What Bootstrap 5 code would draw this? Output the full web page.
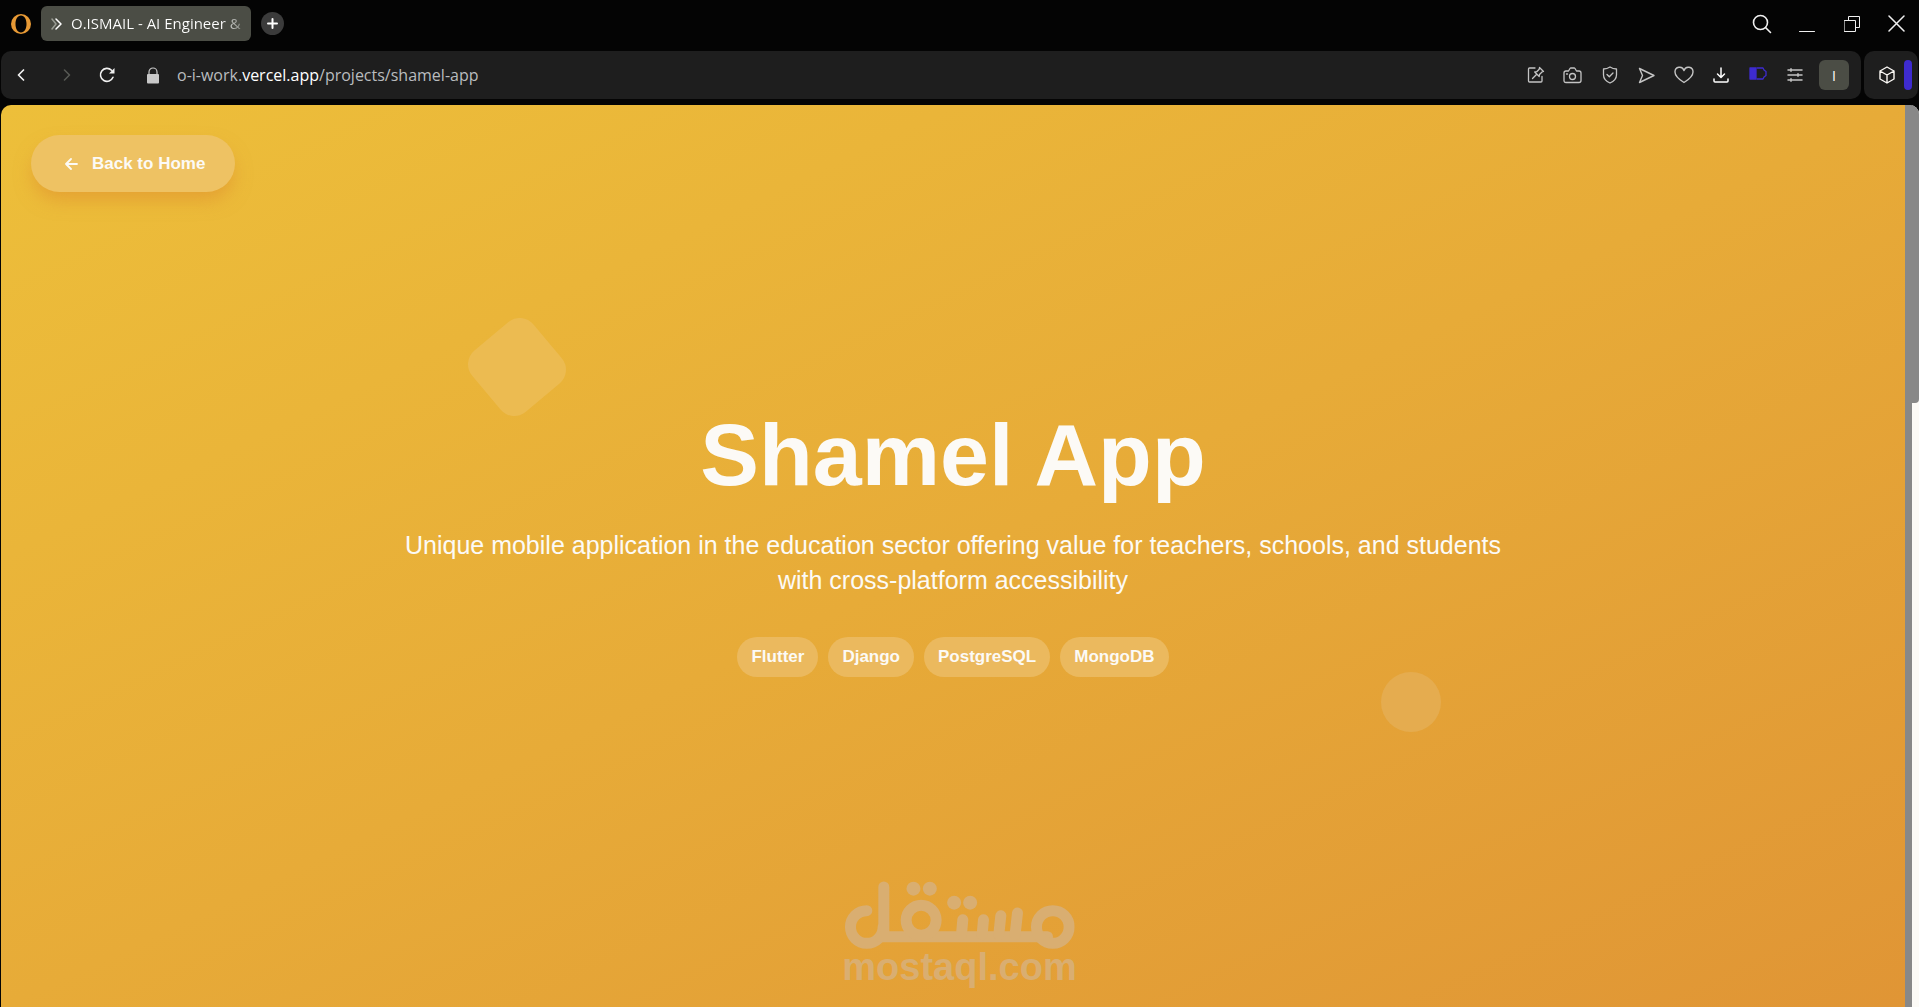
<!DOCTYPE html>
<html lang="en">
<head>
<meta charset="utf-8">
<meta name="viewport" content="width=device-width, initial-scale=1">
<title>O.ISMAIL - AI Engineer</title>
<link href="https://cdn.jsdelivr.net/npm/bootstrap@5.3.0/dist/css/bootstrap.min.css" rel="stylesheet">
<style>
  body { background: #040404; font-family: "Liberation Sans", Arial, sans-serif; color: #fcfaf6; }
  svg { display: block; fill: none; stroke: currentColor; stroke-linecap: round; stroke-linejoin: round; }
  button { color: inherit; }
  .chrome-text { font-family: "Open Sans", "Noto Sans", sans-serif; }

  .tab-strip { height: 51px; padding: 0 0 4px 11px; gap: 10px; }
  .tab-item { height: 35px; width: 210px; background: #4b4d45; border-radius: 6px; padding: 0 12px 0 10px; font-size: 15px; gap: 8px; color: #fff; }
  .tab-title { white-space: nowrap; background: linear-gradient(90deg, #fff 88%, #888a83); -webkit-background-clip: text; background-clip: text; color: transparent; }
  .tab-add { width: 23px; height: 23px; background: #3b3b3b; }
  .win-btn { width: 45px; height: 36px; color: #f0f0f0; }

  .bar-row { gap: 3px; padding: 0 1px; }
  .bar-panel { height: 48px; background: #1e1e1e; border-radius: 10px; }
  .bar-btn { width: 37px; height: 36px; color: #c4c4c4; }
  .nav-btn { width: 40px; height: 36px; color: #f0f0f0; }
  .nav-set { margin-right: 20px; }
  .nav-off { color: #585a55; margin-left: 6px; }
  .address-set { gap: 18px; color: #c8c8c8; }
  .address { font-size: 16px; color: #b9bcbe; white-space: nowrap; }
  .address strong { color: #fff; font-weight: 400; }
  .battery { color: #3e2bd0; }
  .avatar { width: 30px; height: 30px; background: #4b4d45; border-radius: 6px; font-size: 14px; color: #fff; margin: 0 12px 0 6px; }
  .side-panel { width: 54px; padding: 0 6px 0 14px; }
  .side-mark { width: 8px; height: 30px; background: #3e2bd0; border-radius: 4px; }

  .page-view { margin: 6px 0 0 1px; }
  .hero { background: linear-gradient(to bottom right, #edbf3a, #e7ab38 50%, #e09535); border-top-left-radius: 10px; padding-bottom: 29px; }
  .back-link { top: 30px; left: 30px; height: 57px; padding: 0 30px 0 34px; gap: 14px; border-radius: 29px; background: #eec263; color: #fcfaf6; font-size: 17px; font-weight: 700; box-shadow: 0 10px 18px -2px rgba(222, 140, 46, .55); }
  .hero-title { font-size: 88px; line-height: 96px; font-weight: 700; margin-bottom: 25px; }
  .hero-lead { font-size: 25px; line-height: 35px; max-width: 1120px; margin-bottom: 39px; }
  .tag-row { gap: 10px; }
  .tag-pill { height: 40px; padding: 0 14px; border-radius: 20px; background: #ebb95e; font-size: 17px; font-weight: 700; }
  .shape-square { width: 80px; height: 80px; left: 25%; top: 222px; border-radius: 18px; background: #ecbb51; transform: rotate(50deg); }
  .shape-round { width: 60px; height: 60px; right: 464px; bottom: 275px; border-radius: 50%; background: #e5ac4f; }

  .scroll-track { width: 14px; background: linear-gradient(90deg, #888 50%, #fcfaf6 50%); border-top-right-radius: 9px; }
  .scroll-thumb { height: 33%; background: #888; border-radius: 0 9px 4px 0; }

  .watermark { bottom: 22px; color: #d9ae71; font-size: 38px; line-height: 36px; font-weight: 700; pointer-events: none; }
</style>
</head>
<body>
<div class="d-flex flex-column vh-100 overflow-hidden position-relative">
  <header class="chrome-text">
    <div class="tab-strip d-flex align-items-center">
      <svg width="20" height="20" viewBox="0 0 20 20" class="flex-shrink-0" aria-label="Browser menu"><path fill="#e89a35" stroke="none" fill-rule="evenodd" d="M10 0a10 10 0 1 0 0 20a10 10 0 1 0 0-20zM10 1.500c3.500 0 5.500 4 5.500 8.500s-2 8.500-5.500 8.500s-5.500-4-5.500-8.500s2-8.500 5.500-8.500z"/></svg>
      <div class="tab-item d-flex align-items-center">
        <svg width="12" height="12" viewBox="0 0 12 12" class="flex-shrink-0" stroke-width="1.500"><path stroke="#9a9c94" d="M1 1l4 5l-4 5"/><path d="M5 1l5 5l-5 5"/></svg>
        <span class="tab-title">O.ISMAIL - AI Engineer &amp;</span>
      </div>
      <button class="tab-add btn p-0 border-0 rounded-circle d-flex align-items-center justify-content-center text-white" aria-label="New tab"><svg width="11" height="11" viewBox="0 0 11 11" stroke-width="2"><path d="M5.500 1v9M1 5.500h9"/></svg></button>
      <div class="d-flex ms-auto">
        <button class="win-btn btn p-0 border-0 d-flex align-items-center justify-content-center" aria-label="Search tabs"><svg width="20" height="20" viewBox="0 0 20 20" stroke-width="1.600"><circle cx="8.500" cy="8.500" r="7"/><path d="M13.500 13.500l5 5"/></svg></button>
        <button class="win-btn btn p-0 border-0 d-flex align-items-center justify-content-center" aria-label="Minimize"><svg width="16" height="16" viewBox="0 0 16 16"><path d="M.5 15.500h15"/></svg></button>
        <button class="win-btn btn p-0 border-0 d-flex align-items-center justify-content-center" aria-label="Restore"><svg width="16" height="16" viewBox="0 0 16 16"><path d="M.5 4.500h11v11h-11zM4.500 4.500v-4h11v11h-4"/></svg></button>
        <button class="win-btn btn p-0 border-0 d-flex align-items-center justify-content-center" aria-label="Close"><svg width="17" height="17" viewBox="0 0 17 17" stroke-width="1.500"><path d="M1 1l15 15M16 1l-15 15"/></svg></button>
      </div>
    </div>

    <div class="bar-row d-flex">
      <nav class="bar-panel d-flex align-items-center flex-grow-1">
        <div class="nav-set d-flex">
          <button class="nav-btn btn p-0 border-0 d-flex align-items-center justify-content-center" aria-label="Back"><svg width="8" height="12" viewBox="0 0 8 12" stroke-width="1.700"><path d="M6.500 1l-5 5l5 5"/></svg></button>
          <button class="nav-btn nav-off btn p-0 border-0 d-flex align-items-center justify-content-center" aria-label="Forward"><svg width="8" height="12" viewBox="0 0 8 12" stroke-width="1.500"><path d="M1.500 1l5 5l-5 5"/></svg></button>
          <button class="nav-btn btn p-0 border-0 d-flex align-items-center justify-content-center" aria-label="Reload"><svg width="16" height="16" viewBox="0 0 16 16" stroke-width="1.600"><path d="M12.500 3.200A6.500 6.500 0 1 0 14 10.300"/><path fill="currentColor" stroke="none" d="M15.500 1v5.500H10z"/></svg></button>
        </div>
        <div class="address-set d-flex align-items-center">
          <svg width="12" height="17" viewBox="0 0 12 17" class="flex-shrink-0" stroke-width="1.200" aria-label="Secure"><path d="M2 7.500V5a4 4 0 0 1 8 0v2.500"/><rect x="0" y="7" width="12" height="9.500" rx="1" fill="currentColor" stroke="none"/></svg>
          <div class="address">o-i-work.<strong>vercel.app</strong>/projects/shamel-app</div>
        </div>
        <div class="d-flex align-items-center ms-auto">
          <button class="bar-btn btn p-0 border-0 d-flex align-items-center justify-content-center" aria-label="Pin page"><svg width="18" height="18" viewBox="0 0 18 18" stroke-width="1.300"><path d="M8 2H2.500Q1.500 2 1.500 3v12q0 1 1 1h11.500q1 0 1-1v-4.500"/><path d="M12.500 1.500l4 4l-1.500.5l-2.500 2.500l-.3 2l-4.500-4.500l2-.3l2.500-2.500zM9.500 8.500l-4 4"/></svg></button>
          <button class="bar-btn btn p-0 border-0 d-flex align-items-center justify-content-center" aria-label="Snapshot"><svg width="19" height="17" viewBox="0 0 19 17" stroke-width="1.300"><path d="M1 6q0-2 2-2h2.500l1.500-2.500q.3-.5 1-.5h3q.7 0 1 .5L13.500 4H16q2 0 2 2v7.500q0 2-2 2H3q-2 0-2-2z"/><circle cx="9.500" cy="9.500" r="3"/><path d="M3.500 7h1"/></svg></button>
          <button class="bar-btn btn p-0 border-0 d-flex align-items-center justify-content-center" aria-label="Ad blocker"><svg width="16" height="18" viewBox="0 0 16 18" stroke-width="1.300"><path d="M8 1q3 2 6.500 2v6q0 5-6.500 8q-6.500-3-6.500-8V3Q5 3 8 1z"/><path d="M5 8.500l2.300 2.300L11 7"/></svg></button>
          <button class="bar-btn btn p-0 border-0 d-flex align-items-center justify-content-center" aria-label="Send"><svg width="17" height="17" viewBox="0 0 17 17" stroke-width="1.400"><path d="M1.500 1.500L16 8.500L1.500 15.500L4.500 8.500z"/></svg></button>
          <button class="bar-btn btn p-0 border-0 d-flex align-items-center justify-content-center" aria-label="Bookmark"><svg width="20" height="18" viewBox="0 0 20 18" stroke-width="1.400"><path d="M10 16.500Q1 11 1 6a4.600 4.600 0 0 1 9-1.500A4.600 4.600 0 0 1 19 6q0 5-9 10.500z"/></svg></button>
          <button class="bar-btn btn p-0 border-0 d-flex align-items-center justify-content-center text-white" aria-label="Downloads"><svg width="16" height="16" viewBox="0 0 16 16" stroke-width="1.500"><path d="M8 1v9M4.500 7L8 10.500L11.500 7M1 12v2q0 1 1 1h12q1 0 1-1v-2"/></svg></button>
          <button class="bar-btn battery btn p-0 border-0 d-flex align-items-center justify-content-center pb-1" aria-label="Battery saver"><svg width="18" height="13" viewBox="0 0 18 13" stroke-width="1.300"><path fill="currentColor" d="M1 1h6v11H1z"/><path d="M8 1h6l1 2l2 1.500v4L15 10l-1 2H8"/></svg></button>
          <button class="bar-btn btn p-0 border-0 d-flex align-items-center justify-content-center" aria-label="Easy setup"><svg width="16" height="14" viewBox="0 0 16 14" stroke-width="1.500"><path d="M1 2h14M1 7h14M1 12h14M4 .8v2.400M11 5.800v2.400M4 10.800v2.400"/></svg></button>
          <button class="avatar btn p-0 border-0" aria-label="Profile">I</button>
        </div>
      </nav>
      <div class="bar-panel side-panel d-flex align-items-center justify-content-between">
        <svg width="18" height="18" viewBox="0 0 18 18" stroke-width="1.400" aria-label="Extensions"><path d="M9 1l7 4v8l-7 4l-7-4V5zM2 5l7 4l7-4M9 9v8"/></svg>
        <span class="side-mark"></span>
      </div>
    </div>
  </header>

  <div class="page-view d-flex flex-grow-1">
    <main class="hero flex-grow-1 position-relative d-flex flex-column align-items-center justify-content-center text-center">
      <a href="#" class="back-link position-absolute d-flex align-items-center text-decoration-none">
        <svg width="13" height="12" viewBox="0 0 13 12" stroke-width="1.800"><path d="M12 6H1M6 1L1 6l5 5"/></svg>
        Back to Home
      </a>
      <span class="shape-square position-absolute"></span>
      <span class="shape-round position-absolute"></span>
      <h1 class="hero-title">Shamel App</h1>
      <p class="hero-lead">Unique mobile application in the education sector offering value for teachers, schools, and students with cross-platform accessibility</p>
      <div class="tag-row d-flex flex-wrap justify-content-center">
        <span class="tag-pill d-flex align-items-center">Flutter</span>
        <span class="tag-pill d-flex align-items-center">Django</span>
        <span class="tag-pill d-flex align-items-center">PostgreSQL</span>
        <span class="tag-pill d-flex align-items-center">MongoDB</span>
      </div>
    </main>
    <div class="scroll-track flex-shrink-0"><div class="scroll-thumb"></div></div>
  </div>

  <div class="watermark position-absolute start-50 translate-middle-x d-flex flex-column align-items-center">
    <svg width="230" height="68" viewBox="42 32 690 204" stroke-width="33" role="img" aria-label="Mostaql">
      <path d="M108 121A49 49 0 1 0 157 170M159 50v140"/>
      <path d="M150 199H650"/>
      <circle cx="271" cy="150" r="45"/>
      <path d="M396 148l-4 45M458 148l-4 45M510 136l-6 57M560 128l-7 65"/>
      <circle cx="666" cy="170" r="49"/>
      <g fill="currentColor" stroke="none"><circle cx="248" cy="55" r="21"/><circle cx="297" cy="55" r="21"/><circle cx="370" cy="97" r="21"/><circle cx="418" cy="97" r="21"/></g>
    </svg>
    <span>mostaql.com</span>
  </div>
</div>
<script src="https://cdn.jsdelivr.net/npm/bootstrap@5.3.0/dist/js/bootstrap.bundle.min.js"></script>
</body>
</html>
